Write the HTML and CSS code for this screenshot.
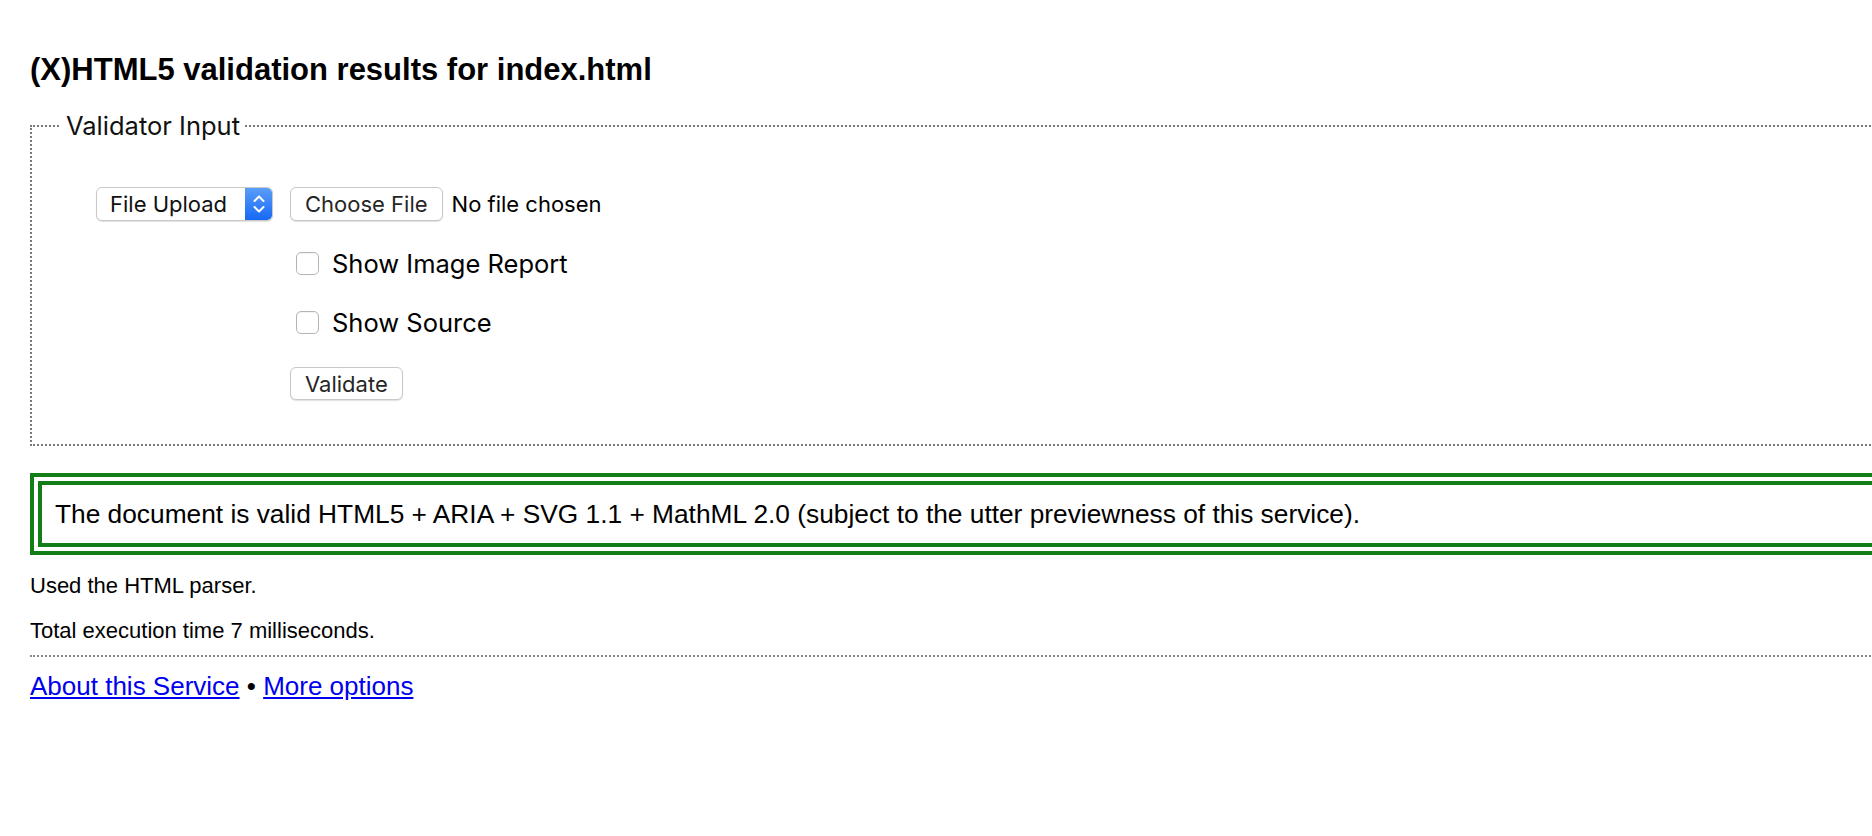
FILE: index.html
```html
<!DOCTYPE html>
<html lang="en">
<head>
<meta charset="utf-8">
<title>(X)HTML5 validation results for index.html</title>
<link rel="stylesheet" href="styles.css">
</head>
<body>
<div class="page">
  <h1 class="title">(X)HTML5 validation results for index.html</h1>
  <fieldset class="input-set">
    <legend class="input-legend">Validator Input</legend>
    <div class="form-grid">
      <div class="select">
        <span class="select-label">File Upload</span>
        <span class="stepper">
          <svg width="16" height="26" viewBox="0 0 16 26" aria-hidden="true">
            <path d="M3.5 10 L8 5.5 L12.5 10" fill="none" stroke="#fff" stroke-width="2" stroke-linecap="round" stroke-linejoin="round"/>
            <path d="M3.5 16 L8 20.5 L12.5 16" fill="none" stroke="#fff" stroke-width="2" stroke-linecap="round" stroke-linejoin="round"/>
          </svg>
        </span>
      </div>
      <div class="file-row">
        <span class="btn">Choose File</span>
        <span class="file-status">No file chosen</span>
      </div>
      <label class="check-row row-a"><span class="checkbox"></span><span class="check-label">Show Image Report</span></label>
      <label class="check-row row-b"><span class="checkbox"></span><span class="check-label">Show Source</span></label>
      <div class="submit-row"><span class="btn btn-validate">Validate</span></div>
    </div>
  </fieldset>
  <div class="success">The document is valid HTML5 + ARIA + SVG 1.1 + MathML 2.0 (subject to the utter previewness of this service).</div>
  <p class="note note-first">Used the HTML parser.</p>
  <p class="note">Total execution time 7 milliseconds.</p>
  <hr class="rule">
  <p class="footer"><a href="#" class="link">About this Service</a> • <a href="#" class="link">More options</a></p>
</div>
</body>
</html>
```
FILE: styles.css
```css
html {
  overflow: hidden;
  background: #fff;
}
body {
  margin: 0;
  padding: 52px 0 0 30px;
  font-family: "Liberation Sans", Arial, sans-serif;
  font-size: 26px;
  color: #000;
}
.page {
  width: 2000px;
}
.title {
  margin: 0;
  font-size: 31px;
  line-height: 36px;
  font-weight: bold;
}
.input-set {
  margin: 23px 0 0 0;
  padding: 46px 0 46px 64px;
  border: 2px dotted #7a7a7a;
  border-right: none;
  min-width: 0;
}
.input-legend {
  margin-left: -35px;
  padding: 0 5px;
  font-family: Inter, "Noto Sans", sans-serif;
  font-size: 25.5px;
  line-height: 30px;
  color: #111;
}
.form-grid {
  display: grid;
  grid-template-columns: 194px auto;
  grid-auto-rows: 34px;
  row-gap: 25px;
  justify-content: start;
  align-items: center;
}
.select {
  grid-column: 1;
  width: 177px;
  height: 34px;
  box-sizing: border-box;
  border: 1px solid #c9c9c9;
  border-radius: 6px;
  box-shadow: 0 1px 1px rgba(0,0,0,0.12);
  background: #fff;
  display: flex;
  align-items: center;
  justify-content: space-between;
  overflow: hidden;
  font-family: Inter, "Noto Sans", sans-serif;
  font-size: 22px;
}
.select-label {
  padding-left: 13px;
  color: #111;
}
.stepper {
  width: 28px;
  height: 34px;
  margin-right: -1px;
  background: linear-gradient(#5c9ff8, #1467f5);
  display: flex;
  align-items: center;
  justify-content: center;
}
.file-row {
  grid-column: 2;
  display: flex;
  align-items: center;
  gap: 9px;
  font-family: Inter, "Noto Sans", sans-serif;
  font-size: 22px;
}
.btn {
  display: inline-flex;
  align-items: center;
  height: 34px;
  box-sizing: border-box;
  padding: 0 14px;
  border: 1px solid #c8c8c8;
  border-radius: 6px;
  box-shadow: 0 1px 1px rgba(0,0,0,0.12);
  background: #fff;
  color: #262626;
  font-family: Inter, "Noto Sans", sans-serif;
  font-size: 22px;
}
.file-status {
  color: #000;
}
.check-row {
  grid-column: 2;
  display: flex;
  align-items: center;
  font-family: Inter, "Noto Sans", sans-serif;
  font-size: 25.5px;
}
.checkbox {
  width: 23px;
  height: 23px;
  box-sizing: border-box;
  margin-left: 6px;
  margin-right: 13px;
  border: 1px solid #b4b4b4;
  border-radius: 5px;
  background: #fff;
  box-shadow: inset 0 1px 1px rgba(0,0,0,0.05);
}
.submit-row {
  grid-column: 2;
  margin-top: 5px;
}
.btn-validate {
  height: 33px;
}
.success {
  margin-top: 27px;
  border: 12px double #137e17;
  border-right: none;
  padding: 14px 13px;
  line-height: 30px;
  font-size: 26.3px;
}
.note {
  margin: 20px 0 0 0;
  font-size: 22px;
  line-height: 25px;
}
.note-first {
  margin-top: 18px;
}
.rule {
  margin: 12px 0 0 0;
  border: none;
  border-top: 2px dotted #8a8a8a;
  height: 0;
}
.footer {
  margin: 14px 0 0 0;
  line-height: 30px;
}
.link {
  color: #0000ee;
  text-decoration: underline;
}
```
